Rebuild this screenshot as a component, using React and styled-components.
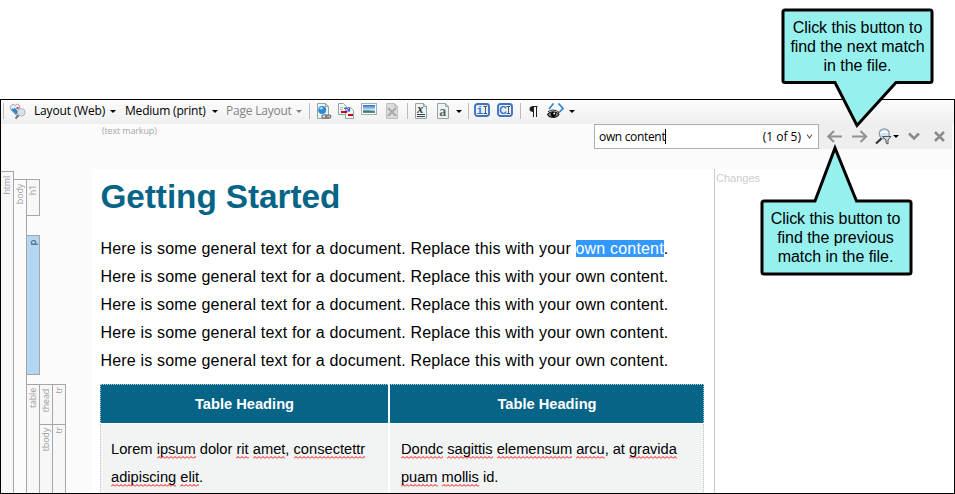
import React from "react";
import styled, { createGlobalStyle } from "styled-components";

const GlobalStyle = createGlobalStyle`
  * { box-sizing: border-box; }
  body { margin: 0; background: #fff; overflow: hidden; }
`;

const UI = `"Open Sans", "Noto Sans", sans-serif`;
const DOC = `"Liberation Sans", Arial, sans-serif`;

const Page = styled.div`
  width: 955px;
  height: 494px;
  padding-top: 99px;
  position: relative;
`;
const Window = styled.div`
  height: 395px;
  border: 1px solid #000;
  display: flex;
  flex-direction: column;
  background: #fbfbfb;
  overflow: hidden;
`;

/* toolbar */
const Toolbar = styled.div`
  height: 24px;
  flex: none;
  display: flex;
  align-items: center;
  padding: 0 0 2px 2px;
  background: linear-gradient(#fcfcfc, #efefef);
`;
const Divider = styled.span`
  width: 1px;
  height: 16px;
  flex: none;
  margin-left: ${(p) => p.$gap}px;
  background: #bcbcbc;
`;
const IconSlot = styled.span`
  display: flex;
  flex: none;
  margin-left: ${(p) => p.$gap}px;
  margin-bottom: ${(p) => p.$raise || 0}px;
  svg { display: block; }
`;
const DropButton = styled.span`
  display: flex;
  flex: none;
  align-items: center;
  justify-content: space-between;
  width: ${(p) => p.$w}px;
  margin-left: ${(p) => p.$gap}px;
  font: 12px/16px ${UI};
  letter-spacing: ${(p) => p.$track}px;
  white-space: nowrap;
  color: ${(p) => (p.$off ? "#838383" : "#000")};
`;
const Caret = styled.i`
  flex: none;
  width: 0;
  height: 0;
  margin-left: ${(p) => p.$gap || 0}px;
  border: 3px solid transparent;
  border-bottom: 0;
  border-top-color: currentColor;
`;

/* find bar */
const MarkupRow = styled.div`
  height: 45px;
  flex: none;
  display: flex;
  align-items: flex-start;
  justify-content: space-between;
  padding: 0 2px 0 101px;
`;
const MarkupNote = styled.span`
  font: 9px/14px ${UI};
  letter-spacing: -0.15px;
  color: #a6a6a6;
`;
const FindBar = styled.div`
  display: flex;
  align-items: center;
  width: 358px;
  height: 25px;
  background: #eee;
`;
const FindInput = styled.div`
  display: flex;
  align-items: center;
  width: 225px;
  height: 25px;
  padding: 0 5px 0 4px;
  border: 1px solid #abadb3;
  background: #fff;
  font: 12px/16px ${UI};
  color: #000;
`;
const Query = styled.span`
  letter-spacing: -0.33px;
`;
const TextCursor = styled.i`
  width: 1px;
  height: 15px;
  background: #000;
`;
const Count = styled.span`
  margin-left: auto;
  margin-right: 5px;
  padding-top: 1px;
`;

/* editor */
const Editor = styled.div`
  flex: 1;
  min-height: 0;
  display: flex;
`;
const Gutter = styled.div`
  width: 91px;
  flex: none;
  display: flex;
  align-items: flex-start;
`;
const Track = styled.div`
  width: 13px;
  height: 100%;
  padding-top: ${(p) => p.$top || 0}px;
  flex: none;
  display: flex;
  flex-direction: column;
`;
const Tag = styled.div`
  flex: ${(p) => (p.$h ? "none" : "1")};
  height: ${(p) => (p.$h ? `${p.$h}px` : "auto")};
  margin-top: ${(p) => p.$gap || 0}px;
  border: solid #a6a6a6;
  border-width: ${(p) => p.$edges || "1px 1px 0 0"};
  background: ${(p) => p.$fill || "#f7f7f7"};
  color: ${(p) => p.$ink || "#a0a0a0"};
  padding-top: ${(p) => p.$pad || 4}px;
`;
const TagName = styled.span`
  display: block;
  width: 11px;
  writing-mode: vertical-rl;
  transform: rotate(180deg);
  font: 9px/11px ${UI};
  letter-spacing: -0.2px;
`;
const Sheet = styled.div`
  width: 622px;
  flex: none;
  padding: 0 10px 0 8px;
  background: #fff;
  overflow: hidden;
`;
const Title = styled.h1`
  margin: 8px 0 0 0.5px;
  font: bold 33.3px/40px ${DOC};
  letter-spacing: -0.05px;
  color: #066486;
`;
const Copy = styled.p`
  margin: ${(p) => (p.$first ? 18 : 0)}px 0 0 0.5px;
  font: 16px/28px ${DOC};
  letter-spacing: 0.18px;
  white-space: nowrap;
  color: #000;
`;
const Mark = styled.span`
  background: #3399ff;
  color: #fff;
`;
const Grid = styled.div`
  display: grid;
  grid-template-columns: 288px 315px;
  grid-template-rows: 39px 100px;
  gap: 1px;
  margin-top: 9px;
  width: 604px;
`;
const HeadCell = styled.div`
  display: flex;
  align-items: center;
  justify-content: center;
  padding-left: ${(p) => (p.$last ? 1 : 0)}px;
  border-top: 1px dotted #b9ced6;
  border-left: 1px ${(p) => (p.$last ? "solid #fff" : "dotted #b9ced6")};
  border-right: ${(p) => (p.$last ? "1px dotted #b9ced6" : "0")};
  background: #066486;
  font: bold 14.67px/20px ${DOC};
  color: #fff;
`;
const Cell = styled.div`
  padding: 11px 0 0 ${(p) => (p.$last ? 11 : 10)}px;
  border-left: 1px ${(p) => (p.$last ? "solid #fff" : "dotted #c4c4c4")};
  border-right: ${(p) => (p.$last ? "1px dotted #c4c4c4" : "0")};
  background: #f2f4f4;
  font: 14.67px/28px ${DOC};
  letter-spacing: ${(p) => (p.$last ? -0.03 : 0)}px;
  white-space: pre;
  color: #000;
`;
const Typo = styled.span`
  padding-bottom: 2px;
  background: url("data:image/svg+xml,%3Csvg xmlns='http://www.w3.org/2000/svg' width='4' height='3'%3E%3Cpath d='M0 2.5L2 .5L4 2.5' fill='none' stroke='%23f00' stroke-width='1'/%3E%3C/svg%3E") left bottom repeat-x;
`;
const Changes = styled.div`
  flex: 1;
  border-left: 1px solid #c8c8c8;
  background: #fff;
  padding: 2px 0 0 1px;
  font: 11px/14px ${DOC};
  color: #cdcdcd;
`;

/* callouts */
const Callout = styled.div`
  position: absolute;
  left: ${(p) => p.$x}px;
  top: ${(p) => p.$y}px;
  width: 154px;
  height: 134px;
  padding: ${(p) => p.$pad}px 1px 0 0;
  font: 16px/19px ${DOC};
  letter-spacing: -0.05px;
  text-align: center;
  color: #000;
`;
const Bubble = styled.svg`
  position: absolute;
  inset: 0;
  fill: #96f0ee;
  stroke: #000;
  stroke-width: 3;
`;
const Line = styled.div`
  position: relative;
`;

const Svg = ({ w = 16, h = 16, children }) => (
  <svg width={w} height={h} viewBox={`0 0 ${w} ${h}`} fill="none">{children}</svg>
);

const ToolsIcon = () => (
  <Svg w={17} h={17}>
    <path d="M1 3.500L4 1l2 1.500L8.500 1l2.500 2-1 3 3 2-5 5-6-6z" fill="#e9edf0" stroke="#9fa6ab" />
    <path d="M3 6l5 5M5 5.500l4 4" stroke="#2d87c8" strokeWidth="1.800" />
    <path d="M7.500 4h2v2h-2z" fill="#e23a2e" />
    <path d="M10 12l-3.500 3.500" stroke="#777" strokeWidth="2" />
    <circle cx="12.300" cy="9.300" r="3.800" fill="#dbe3ea" stroke="#a9b2ba" />
  </Svg>
);
const DocShape = ({ fill = "#edf3f3", stroke = "#8fa5a8" }) => (
  <>
    <path d="M.5 .5h8l3 3v12h-11z" fill={fill} stroke={stroke} />
    <path d="M8.500 .5v3h3" stroke={stroke} />
  </>
);
const LinkIcon = () => (
  <Svg>
    <g transform="translate(1 0)"><DocShape /></g>
    <circle cx="6.200" cy="7" r="4" fill="#2d8ad6" />
    <path d="M3 6c2-3 4-2 4-1s-2 2-4 1z" fill="#a5dcf7" />
    <ellipse cx="8.500" cy="13.500" rx="2.600" ry="1.700" fill="#eee" stroke="#77777c" strokeWidth="1.300" />
    <ellipse cx="12.200" cy="13.500" rx="2.600" ry="1.700" stroke="#77777c" strokeWidth="1.300" />
  </Svg>
);
const PagesIcon = () => (
  <Svg>
    <path d="M.5 .5h5l3 3v8h-8z" fill="#f4f7f7" stroke="#8fa5a8" />
    <path d="M2 4.500h3M2 6.500h3" stroke="#a7b6b8" />
    <path d="M7.500 4.500h5l3 3v8h-8z" fill="#f4f7f7" stroke="#8fa5a8" />
    <path d="M3 8h6v2H3zM10 11h5v2h-5z" fill="#d3000c" />
    <path d="M6 5.500c3-1 4 0 5 2M11.500 4.500v3.500H8" stroke="#3157d6" strokeWidth="1.200" />
  </Svg>
);
const ImageIcon = () => (
  <Svg h={12}>
    <defs>
      <linearGradient id="sky" x1="0" y1="0" x2="0" y2="1">
        <stop offset="0" stopColor="#3468b8" />
        <stop offset=".4" stopColor="#8fc2e8" />
        <stop offset=".62" stopColor="#cfe8f3" />
        <stop offset=".74" stopColor="#2d6874" />
        <stop offset="1" stopColor="#5f9f8e" />
      </linearGradient>
    </defs>
    <rect x=".5" y=".5" width="15" height="11" fill="#fff" stroke="#9fb0b5" />
    <rect x="2" y="2" width="12" height="8" fill="url(#sky)" />
    <path d="M8 7.500L14 5v3.500z" fill="#c6e4f0" opacity=".6" />
  </Svg>
);
const RemoveIcon = () => (
  <Svg w={12}>
    <DocShape fill="#dcdcdc" stroke="#c0c0c0" />
    <path d="M2 5l8 8M10 5l-8 8" stroke="#a8a8a8" strokeWidth="2" />
  </Svg>
);
const GlyphText = styled.text`
  font: ${(p) => p.$font};
  fill: ${(p) => p.$fill};
`;
const XDocIcon = () => (
  <Svg w={12}>
    <DocShape />
    <GlyphText x="2.300" y="9.500" $font={`italic bold 12px "Liberation Serif", serif`} $fill="#2f3436">x</GlyphText>
    <path d="M2 11.500h8M2 13.500h8" stroke="#3f4446" />
  </Svg>
);
const ADocIcon = () => (
  <Svg w={12}>
    <DocShape />
    <GlyphText x="2.200" y="13" $font={`bold 14px "Liberation Serif", serif`} $fill="#5c6466">a</GlyphText>
  </Svg>
);
const FieldIcon = ({ letter }) => (
  <Svg h={14}>
    <rect x="1" y="1" width="14" height="12" rx="2.500" fill="#e6effb" stroke="#3f74c2" strokeWidth="1.900" />
    <GlyphText
      x={letter === "i" ? 2.6 : 2.2}
      y="10.800"
      $font={letter === "i" ? `bold 11px "Liberation Mono", monospace` : `bold 10.5px ${DOC}`}
      $fill="#4474bc"
    >
      {letter}
    </GlyphText>
    <path d="M9.500 3.500h3.500M11.500 3.500v7M9.500 10.500h3.500" stroke="#555" />
  </Svg>
);
const PilcrowIcon = () => (
  <Svg w={9} h={11}>
    <path d="M4.500 .5h4M4.500 0v11M7.500 0v11" stroke="#1d1d1d" />
    <path d="M4.500 0C2 0 .5 1.200 .5 3s1.500 3 4 3z" fill="#1d1d1d" />
  </Svg>
);
const EyeIcon = () => (
  <Svg w={17} h={17}>
    <path d="M6.500 .5L2 6M11.500 .5l4.500 5-5 5" stroke="#2f86d2" strokeWidth="1.700" />
    <path d="M.5 11.500C3 7.800 9 7.800 12 11.500 9 15.500 3 15.500 .5 11.500z" fill="#8d8d8d" stroke="#1b1b1b" strokeWidth="1.100" />
    <circle cx="6.400" cy="11.300" r="2.600" fill="#000" />
    <circle cx="7.200" cy="10.500" r=".9" fill="#fff" />
    <path d="M1 8.800C4 6.300 9 6.600 12 9.500" stroke="#222" />
  </Svg>
);
const ArrowIcon = ({ right }) => (
  <Svg w={16} h={13}>
    <path
      d={right ? "M0 6.500h14M8.500 1l5.700 5.500-5.700 5.500" : "M15 6.500H1.500M7 1L1.300 6.500 7 12"}
      stroke="#919191" strokeWidth="2"
    />
  </Svg>
);
const FilterIcon = () => (
  <Svg w={17} h={17}>
    <path d="M7 10l-6 5.500" stroke="#303438" strokeWidth="2.200" />
    <circle cx="9.300" cy="5.800" r="5" fill="#cfe5f7" stroke="#8798a6" strokeWidth="1.200" />
    <path d="M5.500 5c2-1.500 5.500-1.500 7.500 0" stroke="#fff" strokeWidth="1.600" />
    <path d="M7.500 8.500h8.500l-3 3.500v4l-2-1v-3z" fill="#d8dadd" stroke="#50555a" />
  </Svg>
);
const ChevronIcon = () => (
  <Svg w={12} h={9}><path d="M1 1.500l5 5 5-5" stroke="#8b8b8b" strokeWidth="2.600" /></Svg>
);
const CloseIcon = () => (
  <Svg w={11} h={11}><path d="M1 1l9 9M10 1l-9 9" stroke="#8b8b8b" strokeWidth="2.500" /></Svg>
);
const SmallChevron = () => (
  <Svg w={7} h={6}><path d="M1 .5l2.500 3.500L6 .5" stroke="#555" strokeWidth="1.100" /></Svg>
);

const LEAD = "Here is some general text for a document. Replace this with your ";

export default function App() {
  return (
    <Page>
      <GlobalStyle />
      <Window>
        <Toolbar>
          <Divider $gap={0} />
          <IconSlot $gap={5}><ToolsIcon /></IconSlot>
          <DropButton $gap={8} $w={82} $track={-0.17}>Layout (Web)<Caret /></DropButton>
          <DropButton $gap={9} $w={93} $track={-0.2}>Medium (print)<Caret /></DropButton>
          <DropButton $gap={8} $w={76} $track={-0.22} $off>Page Layout<Caret /></DropButton>
          <Divider $gap={7} />
          <IconSlot $gap={6}><LinkIcon /></IconSlot>
          <IconSlot $gap={6}><PagesIcon /></IconSlot>
          <IconSlot $gap={7} $raise={4}><ImageIcon /></IconSlot>
          <IconSlot $gap={9}><RemoveIcon /></IconSlot>
          <Divider $gap={9} />
          <IconSlot $gap={7}><XDocIcon /></IconSlot>
          <IconSlot $gap={10}><ADocIcon /></IconSlot>
          <Caret $gap={7} />
          <Divider $gap={6} />
          <IconSlot $gap={5} $raise={2}><FieldIcon letter="i" /></IconSlot>
          <IconSlot $gap={7} $raise={2}><FieldIcon letter="C" /></IconSlot>
          <Divider $gap={7} />
          <IconSlot $gap={8}><PilcrowIcon /></IconSlot>
          <IconSlot $gap={9}><EyeIcon /></IconSlot>
          <Caret $gap={5} />
        </Toolbar>
        <MarkupRow>
          <MarkupNote>(text markup)</MarkupNote>
          <FindBar>
            <FindInput>
              <Query>own content</Query>
              <TextCursor />
              <Count>(1 of 5)</Count>
              <SmallChevron />
            </FindInput>
            <IconSlot $gap={8}><ArrowIcon /></IconSlot>
            <IconSlot $gap={9}><ArrowIcon right /></IconSlot>
            <IconSlot $gap={7}><FilterIcon /></IconSlot>
            <Caret $gap={1} />
            <IconSlot $gap={9}><ChevronIcon /></IconSlot>
            <IconSlot $gap={14}><CloseIcon /></IconSlot>
          </FindBar>
        </MarkupRow>
        <Editor>
          <Gutter>
            <Track $top={2}>
              <Tag><TagName>html</TagName></Tag>
            </Track>
            <Track $top={10}>
              <Tag $fill="#fbfbfb"><TagName>body</TagName></Tag>
            </Track>
            <Track $top={10}>
              <Tag $h={37} $pad={5} $edges="1px 1px 1px 0"><TagName>h1</TagName></Tag>
              <Tag $h={140} $gap={19} $edges="1px 1px 1px 0" $fill="#b3d6f3" $ink="#1f3550"><TagName>p</TagName></Tag>
              <Tag $gap={9} $pad={3}><TagName>table</TagName></Tag>
            </Track>
            <Track $top={215}>
              <Tag $h={40} $pad={4}><TagName>thead</TagName></Tag>
              <Tag $pad={3}><TagName>tbody</TagName></Tag>
            </Track>
            <Track $top={215}>
              <Tag $h={40} $pad={2}><TagName>tr</TagName></Tag>
              <Tag $pad={2}><TagName>tr</TagName></Tag>
            </Track>
          </Gutter>
          <Sheet>
            <Title>Getting Started</Title>
            <Copy $first>{LEAD}<Mark>own content</Mark>.</Copy>
            {[1, 2, 3, 4].map((n) => <Copy key={n}>{LEAD}own content.</Copy>)}
            <Grid>
              <HeadCell>Table Heading</HeadCell>
              <HeadCell $last>Table Heading</HeadCell>
              <Cell>
                Lorem <Typo>ipsum</Typo> dolor <Typo>rit</Typo> <Typo>amet</Typo>, <Typo>consectettr</Typo>
                {"\n"}<Typo>adipiscing</Typo> <Typo>elit</Typo>.
              </Cell>
              <Cell $last>
                <Typo>Dondc</Typo> <Typo>sagittis</Typo> <Typo>elemensum</Typo> <Typo>arcu</Typo>, at <Typo>gravida</Typo>
                {"\n"}<Typo>puam</Typo> <Typo>mollis</Typo> id.
              </Cell>
            </Grid>
          </Sheet>
          <Changes>Changes</Changes>
        </Editor>
      </Window>

      <Callout $x={781} $y={0} $pad={18}>
        <Bubble width="154" height="134">
          <path d="M4 10h145a2 2 0 0 1 2 2v68.500a2 2 0 0 1-2 2h-34L76 125.500 54 82.500H4a2 2 0 0 1-2-2V12a2 2 0 0 1 2-2z" />
        </Bubble>
        <Line>Click this button to</Line>
        <Line>find the next match</Line>
        <Line>in the file.</Line>
      </Callout>
      <Callout $x={759} $y={144} $pad={65}>
        <Bubble width="154" height="134">
          <path d="M5 57h51L76 4l21.500 53H150a2 2 0 0 1 2 2v69a2 2 0 0 1-2 2H5a2 2 0 0 1-2-2V59a2 2 0 0 1 2-2z" />
        </Bubble>
        <Line>Click this button to</Line>
        <Line>find the previous</Line>
        <Line>match in the file.</Line>
      </Callout>
    </Page>
  );
}
